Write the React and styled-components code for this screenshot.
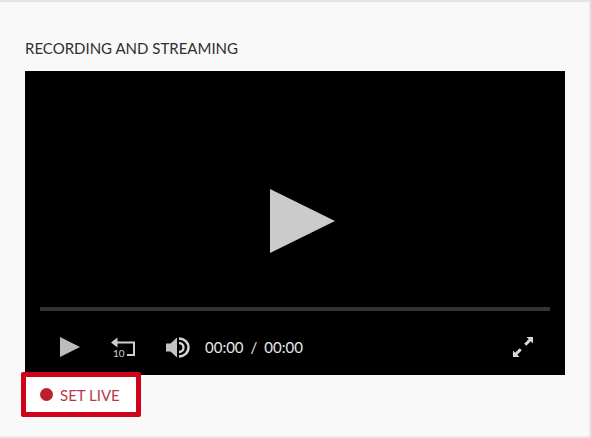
import React from 'react'
import styled, { createGlobalStyle } from 'styled-components'

const GlobalStyle = createGlobalStyle`
  html, body {
    margin: 0;
    padding: 0;
    background: #fff;
  }
  * {
    box-sizing: border-box;
  }
`

const Panel = styled.section`
  width: 591px;
  height: 438px;
  padding: 38px 24px 0 25px;
  background: #f9f9f9;
  border-top: 2px solid #e4e4e4;
  border-right: 2px solid #e8e8e8;
  border-bottom: 2px solid #e8e8e8;
  font-family: Lato, 'Open Sans', sans-serif;
`

const Title = styled.h2`
  margin: 0 0 14px;
  height: 17px;
  line-height: 17px;
  font-size: 15px;
  font-weight: 400;
  color: #2f2f2f;
  white-space: nowrap;
`

const Video = styled.div`
  position: relative;
  width: 540px;
  height: 304px;
  padding: 236px 15px 0;
  background: #000;
`

const BigPlay = styled.svg`
  position: absolute;
  left: 245px;
  top: 118px;
  width: 65px;
  height: 64px;
  fill: #cbcbcb;
`

const Progress = styled.div`
  height: 4px;
  background: #333;
`

const Controls = styled.div`
  display: flex;
  align-items: center;
  height: 20px;
  margin-top: 26px;
  padding: 0 17px 0 20px;
  color: #e6e6e6;
`

const Icon = styled.svg`
  flex: none;
  width: ${p => p.$w}px;
  height: ${p => p.$h || 20}px;
  margin-right: ${p => p.$gap}px;
`

const Time = styled.div`
  display: flex;
  gap: 7px;
  font-size: 15px;
  line-height: 20px;
  color: #e8e8e8;
`

const FullScreen = styled(Icon)`
  margin: 0 0 0 auto;
`

const LiveButton = styled.button`
  display: flex;
  align-items: center;
  gap: 7px;
  width: 120px;
  height: 45px;
  margin: -3px 0 0 -4px;
  padding: 0 0 0 14px;
  position: relative;
  background: #fff;
  border: 5px solid #d0021b;
  border-radius: 2px;
  font-family: inherit;
  font-size: 15px;
  color: #b5394a;
`

const Dot = styled.span`
  width: 13px;
  height: 13px;
  border-radius: 50%;
  background: #bd1f2d;
`

export default function App() {
  return (
    <>
      <GlobalStyle />
      <Panel>
        <Title>RECORDING AND STREAMING</Title>
        <Video>
          <BigPlay viewBox="0 0 65 64">
            <path d="M0 0 65 32 0 64Z" />
          </BigPlay>
          <Progress />
          <Controls>
            <Icon $w={20} $gap={31} viewBox="0 0 20 20" fill="#bdbdbd">
              <path d="M0 0 20 10 0 20Z" />
            </Icon>
            <Icon $w={24} $h={22} $gap={31} viewBox="0 0 24 22">
              <path d="M6 6.5H23V19H16" fill="none" stroke="#cfcfcf" strokeWidth="2" />
              <path d="M6.5 1.5 0 6.5 6.5 11.5Z" fill="#cfcfcf" />
              <text x="2" y="20.5" fontSize="10" fontFamily="Lato, sans-serif" fill="#cfcfcf">10</text>
            </Icon>
            <Icon $w={24} $h={21} $gap={15} viewBox="0 0 24 21">
              <path d="M0 6.5H4.5L11 0.5V20.5L4.5 14.5H0Z" fill="#c4c4c4" />
              <path d="M13 6A4.5 4.5 0 0 1 13 15M13 1.5A9.5 9 0 0 1 13 19.5" fill="none" stroke="#d6d6d6" strokeWidth="2.4" />
            </Icon>
            <Time>
              <span>00:00</span>
              <span>/</span>
              <span>00:00</span>
            </Time>
            <FullScreen $w={20} viewBox="0 0 20 20" fill="#d8d8d8">
              <path d="M13.5 0H20V6.5L17.8 4.3 13.3 8.8 11.2 6.7 15.7 2.2Z" />
              <path d="M6.5 20H0V13.5L2.2 15.7 6.7 11.2 8.8 13.3 4.3 17.8Z" />
            </FullScreen>
          </Controls>
        </Video>
        <LiveButton>
          <Dot />
          SET LIVE
        </LiveButton>
      </Panel>
    </>
  )
}
